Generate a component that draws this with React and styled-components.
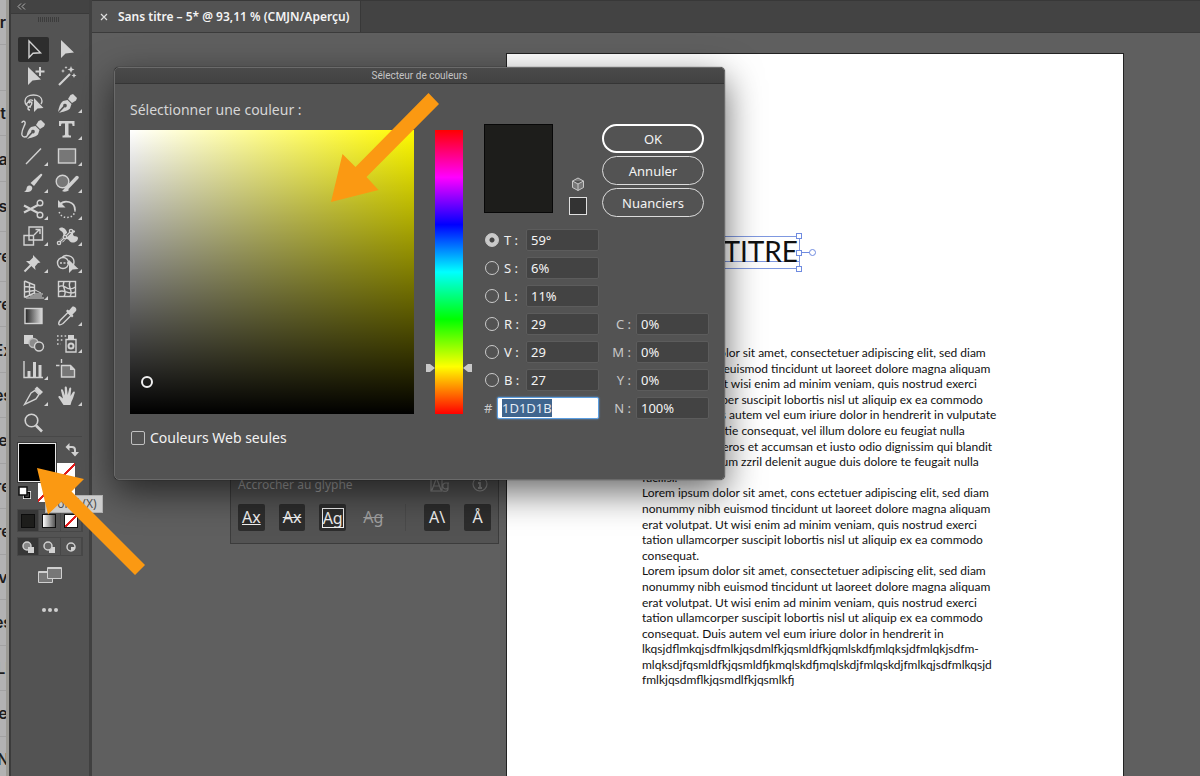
import { useEffect, useRef, useState } from "react";
import styled, { createGlobalStyle, css } from "styled-components";

const UI_FONT = `"Noto Sans", "Open Sans", sans-serif`;
const ORANGE = "#fb9912";

const GlobalStyle = createGlobalStyle`
  * {
    box-sizing: border-box;
  }

  body {
    margin: 0;
    background: #5f5f5f;
    font-family: ${UI_FONT};
    overflow: hidden;
  }

  button, input {
    font-family: inherit;
    margin: 0;
    padding: 0;
  }
`;

const Screen = styled.div`
  position: relative;
  display: flex;
  height: 100vh;
  overflow: hidden;
`;

/* ---------- window behind ---------- */

const BackWindow = styled.div`
  display: flex;
  flex-direction: column;
  flex: none;
  width: 9px;
  margin-bottom: -6px;
  background: #b2b2b2;
  border-right: 3px solid #9c9b95;
  font-family: Inter, sans-serif;
  font-size: 16px;
  font-weight: 600;
  color: #1c1c1c;
`;

const BackRow = styled.div`
  display: flex;
  flex: ${({ $tall }) => ($tall ? 1.1 : 1)} 0 0;
  align-items: center;
  justify-content: center;
  overflow: hidden;
  border-bottom: 1px solid #a2a2a2;
`;

const backRows = [
  { text: "r" },
  { text: "" },
  { text: "t" },
  { text: "a" },
  { text: "s", tall: true },
  { text: "re", tall: true },
  { text: "re" },
  { text: "Ex" },
  { text: "es" },
  { text: "e" },
  { text: "re" },
  { text: "re" },
  { text: "v" },
  { text: "es" },
  { text: "LI" },
  { text: "e" },
  { text: "N" },
];

/* ---------- tool icons ---------- */

const Icon = styled.svg`
  display: block;
  width: 24px;
  height: 24px;
  fill: none;
  stroke: #d2d2d2;
  stroke-width: 1.4;
`;

const solid = { fill: "#d2d2d2", stroke: "none" };

const nib = (
  <>
    <path {...solid} d="M3 21c1-5 2-8.500 5-11l4.500-1 4 4-1.500 4.500c-3 3-7 3-11 4.500l5.500-5.700a1.800 1.800 0 1 0-1.200-1.200z" />
    <path {...solid} d="M13 8l2.500-4 2.500-1 4 4-1 2.500L17 12z" />
  </>
);

const tools = [
  { name: "Sélection", active: true, icon: <path d="M8 4v16.500l4-4.300 7.500-.4z" /> },
  { name: "Sélection directe", icon: <path {...solid} d="M6 3v18l4.500-4.500 8.500-1z" /> },
  {
    name: "Sélection directe progressive",
    icon: (
      <>
        <path {...solid} d="M7 3v18l4.500-4.500 8.500-1z" />
        <path strokeWidth="2" d="M19 3v9M14.500 7.500h9" />
      </>
    ),
  },
  {
    name: "Baguette magique",
    icon: (
      <>
        <path strokeWidth="2.200" d="M4 21l11-11" />
        <path {...solid} d="M16 2l1 2.500 2.500 1-2.500 1-1 2.500-1-2.500-2.500-1 2.500-1zM8 5l.6 1.400L10 7l-1.400.6L8 9l-.6-1.400L6 7l1.400-.6zM19 9l.8 1.700 1.700.8-1.700.8L19 14l-.8-1.700-1.700-.8 1.700-.8zM11 2l.5 1 1 .5-1 .5-.5 1-.5-1-1-.5 1-.5z" />
      </>
    ),
  },
  {
    name: "Lasso",
    icon: (
      <>
        <path d="M10 16c-3 0-6-2-6-6 0-4 4-6 8.500-6S21 6 21 10c0 1-.3 2-1 3M6 14c-1-2 2-4 4-3s0 4-2 5-1 3 1 3M12 10c-3-3-6 1-3 2" />
        <path {...solid} d="M13 7v14l3.500-3.500 6-.5z" />
      </>
    ),
  },
  { name: "Plume", more: true, icon: nib },
  {
    name: "Courbure",
    icon: (
      <>
        <path d="M1 6c0-3 4-2 3 1S0 14 1 18c1 3 4 2 5 1" />
        <g transform="translate(2 0)">{nib}</g>
      </>
    ),
  },
  {
    name: "Texte",
    more: true,
    icon: <path {...solid} d="M4 4h15.500v5h-2c0-2-.5-2.500-1.500-2.500h-2.500V17c0 1.500.5 1.500 2.500 1.500v2H7.500v-2c2 0 2.500 0 2.500-1.500V6.500H7.500C6.500 6.500 6 7 6 9H4z" />,
  },
  { name: "Segment de droite", more: true, icon: <path d="M5 20L20 4.500" /> },
  { name: "Rectangle", more: true, icon: <rect x="3.500" y="5" width="17" height="14" fill="#777" /> },
  {
    name: "Pinceau",
    more: true,
    icon: (
      <>
        <path {...solid} d="M3 20c3 0 2-2 3-4s4-2 5 0-1 5-4 5c-2 0-3 0-4-1z" />
        <path {...solid} d="M9.500 12l10-9c1.200-.8 2.300.3 1.500 1.500L13 15z" />
      </>
    ),
  },
  {
    name: "Forme de tache",
    more: true,
    icon: (
      <>
        <circle cx="7.500" cy="10.500" r="6.300" fill="#777" />
        <path strokeWidth="3.400" strokeLinecap="round" d="M12 17L22 6.500" />
        <path {...solid} d="M7 20c2-1 2-3 4-4l3 3c-2 2-5 2-7 1z" />
      </>
    ),
  },
  {
    name: "Ciseaux",
    more: true,
    icon: (
      <>
        <circle cx="19" cy="6" r="2.800" />
        <circle cx="19" cy="18" r="2.800" />
        <path strokeWidth="2.200" d="M17 8L3 15.500M17 16L3 8.500" />
      </>
    ),
  },
  {
    name: "Rotation",
    more: true,
    icon: (
      <>
        <path strokeWidth="1.800" d="M5 7.500C9 2.500 20 4 20 13" />
        <path strokeWidth="1.500" strokeDasharray="1.500 2" d="M20 13c0 10-16 10-16 0" />
        <path {...solid} d="M3 3v7.500h7.500z" />
      </>
    ),
  },
  {
    name: "Mise à l'échelle",
    more: true,
    icon: (
      <>
        <path d="M8 3h13.500v13H8zM3 11.500h9.500V21H3z" />
        <path d="M13 11l5-5M14.500 5.500H19V10" />
      </>
    ),
  },
  {
    name: "Largeur",
    more: true,
    icon: (
      <>
        <path
          {...solid}
          d="M4 5c1-2 4-2 6 0 2 1.500 2 5 4 5.500 2 0 1-3 3.500-4 2-1 3.500 1 2 2-1.500 0-2 2-1 3 1.500 1.500 4 0 4.500 2.500 0 3-3 5-6 4.500-3-.5-3-4-5.500-3.500-2 .5-2 3.500-5 3.500-2.500 0-3-2-1-3.500C8 13 9 11 8 9 7 7 5 7 4 5z"
        />
        <path stroke="#535353" strokeWidth="3" d="M5 18L15 8" />
        <path strokeWidth="1.200" d="M4 19L16 7" />
        <circle cx="4" cy="19" r="1.600" fill="#535353" />
        <circle cx="10" cy="13" r="1.600" fill="#535353" />
        <circle cx="16" cy="7" r="1.600" fill="#535353" />
      </>
    ),
  },
  {
    name: "Punaise",
    more: true,
    icon: (
      <>
        <path {...solid} d="M12 4l7.500 7.500-2.500.5-3 3.500.5 3.500-9.500-9 3.500 0 3.500-3.500z" />
        <path strokeWidth="2" d="M10 14l-6.500 6.500" />
      </>
    ),
  },
  {
    name: "Concepteur de forme",
    more: true,
    icon: (
      <>
        <circle cx="8" cy="12" r="5.500" />
        <path d="M7 6.500C10 3 19 4 19 11c0 2-.5 3-1 4" />
        <path strokeDasharray="2 1.500" d="M5 12h10" />
        <path {...solid} d="M14 9v13l3.500-3.500 6-.5z" />
      </>
    ),
  },
  {
    name: "Grille de perspective",
    more: true,
    icon: (
      <>
        <path d="M3.500 4v16.500M3.500 4l10 4v8l-10 4.500M3.500 9.500l10 1M3.500 15l10-1.500M8.500 6v12" />
        <path strokeWidth="1" d="M14 13l6 3M13 17h9M9 19h12M5 21h18" />
      </>
    ),
  },
  {
    name: "Filet",
    icon: (
      <>
        <rect x="3.500" y="4.500" width="17" height="15" />
        <path d="M3.500 10c6-5 8 6 17 0M3.500 15c6-4 9 4 17 0M9 4.500c-3 6 4 9 0 15M15 4.500c-3 6 4 9 0 15" />
      </>
    ),
  },
  { name: "Dégradé", icon: <rect x="4" y="4.500" width="17" height="15" fill="url(#toolGradient)" /> },
  {
    name: "Pipette",
    more: true,
    icon: (
      <>
        <path d="M4 20.500c-1-1 0-2.500 1-4l8-8 3 3-8 8c-1.500 1-3 2-4 1z" />
        <path {...solid} d="M11 7l1.500-1.500 1.500 1 3-3.500c2-1.500 5.500 1.500 4 4L17.500 10.500l1 1.500L17 13.500z" />
      </>
    ),
  },
  {
    name: "Dégradé de formes",
    icon: (
      <>
        <path {...solid} d="M3 4h9v9H3z" />
        <circle cx="12.500" cy="12" r="4.500" fill="#8c8c8c" stroke="#bbb" />
        <circle cx="18" cy="15.500" r="4.500" fill="#535353" />
      </>
    ),
  },
  {
    name: "Pulvérisation de symboles",
    more: true,
    icon: (
      <>
        <path d="M11 8.500h10V21H11z" />
        <circle cx="16" cy="15" r="2.500" strokeWidth="2" />
        <path {...solid} d="M13 4h6v4h-6z" />
        <path strokeWidth="1.600" strokeDasharray="1.600 2.200" d="M2 5h10M2 9h7M2 13h4" />
      </>
    ),
  },
  {
    name: "Graphe à barres",
    more: true,
    icon: (
      <>
        <path d="M3 4v16.500h19" />
        <path strokeWidth="3" d="M8 20v-6M13.500 20V5M19 20V8" />
      </>
    ),
  },
  {
    name: "Plan de travail",
    icon: (
      <>
        <path fill="#777" d="M6.500 8.500h9l4 4V20h-13z" />
        <path d="M6.500 2v4M1 8.500h3.500" />
        <path {...solid} d="M15 8v5h5z" />
      </>
    ),
  },
  {
    name: "Tranche",
    more: true,
    icon: (
      <>
        <path d="M3.500 20.500L10 9l4-2.500 4 4L15 15z" />
        <path {...solid} d="M13.500 5l2.500-2.500 6 5.500-3 3z" />
      </>
    ),
  },
  {
    name: "Main",
    more: true,
    icon: (
      <path
        {...solid}
        d="M8.500 21C7 19 5 15.500 3.500 13.500c-.6-1.300 1-2 2-1L8 14.500 6 6.500c-.2-1.500 1.500-1.800 2-.5l2 5.500-.3-8c0-1.500 2-1.500 2.200 0l.8 7.500 1.500-6.500c.5-1.500 2.300-1 2 .5L15.500 12l2.500-4c.8-1.200 2.300-.4 1.700 1-1 3-1.700 6-3.200 8.500L15.500 21z"
      />
    ),
  },
  {
    name: "Zoom",
    icon: (
      <>
        <circle cx="10.500" cy="9.500" r="6.300" strokeWidth="1.600" />
        <path strokeWidth="2.600" d="M15 14.500l6 6" />
      </>
    ),
  },
];

/* ---------- tools panel ---------- */

const ToolPanel = styled.aside`
  display: flex;
  flex-direction: column;
  flex: none;
  width: 83px;
  background: #535353;
  border-left: 2px solid #3b3b3b;
  border-right: 3px solid #404040;
`;

const PanelHeader = styled.div`
  display: flex;
  align-items: center;
  flex: none;
  height: 14px;
  padding-left: 6px;
  background: #434343;
  border-bottom: 1px solid #3a3a3a;
`;

const Grip = styled.div`
  width: 22px;
  height: 5px;
  margin: 3px auto 0 27px;
  background: repeating-linear-gradient(90deg, #3c3c3c 0 1px, #535353 1px 2px);
`;

const ToolGrid = styled.div`
  display: grid;
  grid-template-columns: 34px 34px;
  grid-auto-rows: 1fr;
  height: 400px;
  margin: 14px 0 0 5px;
`;

const ToolButton = styled.button`
  position: relative;
  display: grid;
  place-items: center;
  place-self: center;
  width: 31px;
  height: 25px;
  border: 0;
  border-radius: 2px;
  background: ${({ $active }) => ($active ? "#2d2d2d" : "none")};

  ${({ $more }) =>
    $more &&
    css`
      &::after {
        content: "";
        position: absolute;
        right: 1px;
        bottom: 2px;
        border: 2px solid #d2d2d2;
        border-top-color: transparent;
        border-left-color: transparent;
      }
    `}
`;

const PaintArea = styled.div`
  display: grid;
  grid-template-columns: 20px 18px 12px;
  grid-template-rows: 20px 19px 20px;
  margin: 0 7px;
  padding-top: 6px;
  border-top: 1px solid #484848;
`;

const FillSwatch = styled.button`
  grid-area: 1 / 1 / 3 / 3;
  z-index: 1;
  border: 1px solid #e8e8e8;
  outline: 1px solid #3a3a3a;
  background: #000;
`;

const StrokeSwatch = styled.button`
  grid-area: 2 / 2 / 4 / 4;
  margin-right: -7px;
  border: 0;
  background: linear-gradient(135deg, #fff 48%, #e01b1b 48% 52%, #fff 52%);
`;

const SmallIcon = styled.svg`
  width: 14px;
  height: 14px;
  fill: none;
  stroke: #d0d0d0;
  stroke-width: 1.5;
`;

const SwapButton = styled.button`
  grid-area: 1 / 3;
  margin-left: 9px;
  border: 0;
  background: none;
  width: 14px;
  height: 16px;
`;

const ResetButton = styled.button`
  grid-area: 3 / 1;
  align-self: end;
  width: 14px;
  height: 16px;
  border: 0;
  background: none;
`;

const ModeRow = styled.div`
  display: grid;
  grid-template-columns: repeat(3, 1fr);
  width: 66px;
  margin: ${({ $gap }) => $gap}px 0 0 6px;
  border: 1px solid #474747;
`;

const ModeButton = styled.button`
  display: grid;
  place-items: center;
  height: ${({ $tall }) => ($tall ? 21 : 17)}px;
  border: 0;
  border-right: 1px solid #474747;
  background: ${({ $active }) => ($active ? "#373737" : "none")};
`;

const Chip = styled.span`
  width: 14px;
  height: 14px;
  border: 1px solid ${({ $edge }) => $edge};
  background: ${({ $paint }) => $paint};
`;

const PlainButton = styled.button`
  display: block;
  margin: ${({ $top }) => $top}px auto 0 26px;
  border: 0;
  background: none;
  height: 20px;
`;

const Tooltip = styled.div`
  position: absolute;
  left: 45px;
  top: 495px;
  z-index: 5;
  padding: 0 5px;
  height: 18px;
  background: #cdcdcd;
  border: 1px solid #b0b0b0;
  color: #4d4d4d;
  font-size: 12px;
  line-height: 16px;
`;

function Tools() {
  return (
    <ToolPanel>
      <PanelHeader>
        <svg width="9" height="7" fill="none" stroke="#b0b0b0">
          <path d="M4 .5l-3 3 3 3M8 .5l-3 3 3 3" />
        </svg>
      </PanelHeader>
      <Grip />
      <ToolGrid>
        {tools.map(({ name, icon, active, more }) => (
          <ToolButton key={name} aria-label={name} $active={active} $more={more}>
            <Icon viewBox="0 0 24 24">{icon}</Icon>
          </ToolButton>
        ))}
      </ToolGrid>
      <PaintArea>
        <FillSwatch aria-label="Fond" />
        <StrokeSwatch aria-label="Contour" />
        <SwapButton aria-label="Permuter">
          <SmallIcon viewBox="0 0 14 14">
            <path strokeWidth="2" d="M4 4h3q3 0 3 3v3" />
            <path {...solid} d="M4.500 0v8L.5 4zM6 9h8l-4 4.500z" />
          </SmallIcon>
        </SwapButton>
        <ResetButton aria-label="Par défaut">
          <SmallIcon viewBox="0 0 14 14">
            <rect x="5.500" y="5.500" width="7" height="7" stroke="#fff" strokeWidth="1" />
            <rect x="6.500" y="6.500" width="5" height="5" stroke="#000" strokeWidth="1.500" />
            <rect x="1" y="1" width="8" height="8" fill="#fff" stroke="#111" />
          </SmallIcon>
        </ResetButton>
      </PaintArea>
      <ModeRow $gap={7}>
        <ModeButton $active aria-label="Couleur" $tall>
          <Chip $edge="#0c0c0c" $paint="#1d1d1b" />
        </ModeButton>
        <ModeButton aria-label="Dégradé" $tall>
          <Chip $edge="#111" $paint="linear-gradient(90deg, #fff, #555)" />
        </ModeButton>
        <ModeButton aria-label="Sans" $tall>
          <Chip $edge="#111" $paint="linear-gradient(135deg, #fff 42%, #e01b1b 42% 58%, #fff 58%)" />
        </ModeButton>
      </ModeRow>
      <ModeRow $gap={5}>
        <ModeButton $active aria-label="Dessin normal">
          <SmallIcon viewBox="0 0 14 14">
            <circle cx="6" cy="6" r="4" fill="#888" />
            <path {...solid} d="M7 7h6v6H7z" />
          </SmallIcon>
        </ModeButton>
        <ModeButton aria-label="Dessin arrière">
          <SmallIcon viewBox="0 0 14 14">
            <path {...solid} d="M7 7h6v6H7z" />
            <circle cx="6" cy="6" r="4" fill="#666" />
          </SmallIcon>
        </ModeButton>
        <ModeButton aria-label="Dessin intérieur">
          <SmallIcon viewBox="0 0 14 14">
            <circle cx="7" cy="7" r="4" />
            <path {...solid} d="M7 7h4v2l-3 2H7z" />
          </SmallIcon>
        </ModeButton>
      </ModeRow>
      <PlainButton $top={10} aria-label="Mode d'affichage">
        <svg width="26" height="18" fill="#777" stroke="#cfcfcf">
          <path d="M1.500 5.500h14v11h-14z" />
          <path d="M1.500 6.500h14" />
          <path d="M10.500 1.500h14v11h-14z" />
          <path d="M10.500 2.500h14" />
        </svg>
      </PlainButton>
      <PlainButton $top={14} aria-label="Modifier la barre d'outils">
        <svg width="26" height="10" fill="#cfcfcf">
          <circle cx="7" cy="5" r="2" />
          <circle cx="13" cy="5" r="2" />
          <circle cx="19" cy="5" r="2" />
        </svg>
      </PlainButton>
    </ToolPanel>
  );
}

/* ---------- document ---------- */

const Main = styled.main`
  display: flex;
  flex-direction: column;
  flex: 1;
  min-width: 0;
  background: #5f5f5f;
`;

const TabBar = styled.div`
  display: flex;
  flex: none;
  height: 33px;
  background: #434343;
  border-top: 1px solid #383838;
  border-bottom: 1px solid #3b3b3b;
`;

const Tab = styled.div`
  display: flex;
  align-items: center;
  gap: 10px;
  padding: 0 10px 0 8px;
  background: #535353;
  border-right: 1px solid #383838;
  color: #f4f4f4;
  font-size: 12px;
  font-weight: 600;
`;

const CloseButton = styled.button`
  display: flex;
  border: 0;
  background: none;
`;

const Artboard = styled.article`
  flex: 1;
  margin: 20px 76px 0 414px;
  padding: 182px 0 0 135px;
  background: #fff;
  border: 1px solid #222;
  border-bottom: 0;
  color: #111;
  font-family: Lato, sans-serif;
  white-space: nowrap;
`;

const TitleFrame = styled.div`
  position: relative;
  width: 158px;
  height: 33px;
  border: 1px solid #7f98e0;
`;

const Title = styled.h1`
  margin: 0;
  height: 25px;
  padding-right: 1px;
  border-bottom: 1px solid #7f98e0;
  text-align: right;
  font-size: 28px;
  font-weight: 400;
  line-height: 28px;
`;

const FrameHandles = styled.svg`
  position: absolute;
  right: -18px;
  top: -5px;
  width: 22px;
  height: 41px;
  fill: #fff;
  stroke: #6f8be0;
`;

const Copy = styled.div`
  margin-top: 76px;
  font-size: 12px;
  line-height: 1.3;
`;

const copyLines = [
  "Lorem ipsum dolor sit amet, consectetuer adipiscing elit, sed diam",
  "nonummy nibh euismod tincidunt ut laoreet dolore magna aliquam",
  "erat volutpat. Ut wisi enim ad minim veniam, quis nostrud exerci",
  "tation ullamcorper suscipit lobortis nisl ut aliquip ex ea commodo",
  "consequat. Duis autem vel eum iriure dolor in hendrerit in vulputate",
  "velit esse molestie consequat, vel illum dolore eu feugiat nulla",
  "facilisis at vero eros et accumsan et iusto odio dignissim qui blandit",
  "praesent luptatum zzril delenit augue duis dolore te feugait nulla",
  "facilisi.",
  "Lorem ipsum dolor sit amet, cons ectetuer adipiscing elit, sed diam",
  "nonummy nibh euismod tincidunt ut laoreet dolore magna aliquam",
  "erat volutpat. Ut wisi enim ad minim veniam, quis nostrud exerci",
  "tation ullamcorper suscipit lobortis nisl ut aliquip ex ea commodo",
  "consequat.",
  "Lorem ipsum dolor sit amet, consectetuer adipiscing elit, sed diam",
  "nonummy nibh euismod tincidunt ut laoreet dolore magna aliquam",
  "erat volutpat. Ut wisi enim ad minim veniam, quis nostrud exerci",
  "tation ullamcorper suscipit lobortis nisl ut aliquip ex ea commodo",
  "consequat. Duis autem vel eum iriure dolor in hendrerit in",
  "lkqsjdflmkqjsdfmlkjqsdmlfkjqsmldfkjqmlskdfjmlqksjdfmlqkjsdfm-",
  "mlqksdjfqsmldfkjqsmldfjkmqlskdfjmqlskdjfmlqskdjfmlkqjsdfmlkqsjd",
  "fmlkjqsdmflkjqsmdlfkjqsmlkfj",
];

function Page() {
  return (
    <Main>
      <TabBar>
        <Tab>
          <CloseButton aria-label="Fermer">
            <svg width="8" height="8" stroke="#ddd" strokeWidth="1.200">
              <path d="M1 1l6 6M7 1l-6 6" />
            </svg>
          </CloseButton>
          Sans titre – 5* @ 93,11 % (CMJN/Aperçu)
        </Tab>
      </TabBar>
      <Artboard>
        <TitleFrame>
          <Title>TITRE</Title>
          <FrameHandles viewBox="0 0 22 41">
            <path d="M4 20.500h11" />
            <rect x="1.500" y="1.500" width="5" height="5" />
            <rect x="1.500" y="18.500" width="5" height="5" />
            <rect x="1.500" y="34.500" width="5" height="5" />
            <circle cx="17.500" cy="20.500" r="3" />
          </FrameHandles>
        </TitleFrame>
        <Copy>
          {copyLines.map((line, index) => (
            <div key={index}>{line}</div>
          ))}
        </Copy>
      </Artboard>
    </Main>
  );
}

/* ---------- glyph snapping panel ---------- */

const GlyphPanel = styled.section`
  position: absolute;
  left: 230px;
  top: 440px;
  width: 269px;
  height: 104px;
  padding: 34px 7px 0;
  background: #535353;
  border: 1px solid #3c3c3c;
  color: #a0a0a0;
`;

const GlyphHeader = styled.div`
  display: flex;
  align-items: center;
  height: 18px;
  margin-bottom: 11px;
  font-size: 12px;
`;

const GlyphHeaderIcons = styled.svg`
  width: 58px;
  height: 16px;
  margin-left: auto;
  margin-right: 3px;
  fill: none;
  stroke: #8c8c8c;
  stroke-width: 1.2;
`;

const GlyphRow = styled.div`
  display: flex;
  gap: 14px;
`;

const GlyphButton = styled.button`
  display: grid;
  place-items: center;
  width: 27px;
  height: 27px;
  border: 0;
  border-radius: 2px;
  background: ${({ $flat }) => ($flat ? "none" : "#2d2d2d")};
  color: ${({ $flat }) => ($flat ? "#a0a0a0" : "#f0f0f0")};
  font-size: 16px;
`;

const Letters = styled.span`
  line-height: 19px;
  ${({ $mark }) => $mark === "base" && "text-decoration: underline;"}
  ${({ $mark }) => $mark === "through" && "text-decoration: line-through;"}
  ${({ $mark }) => $mark === "box" && "border: 1px solid #f0f0f0; line-height: 18px;"}
`;

const GlyphDivider = styled.span`
  width: 1px;
  margin: 0 4px;
  background: #4a4a4a;
`;

function GlyphSnap() {
  return (
    <GlyphPanel>
      <GlyphHeader>
        Accrocher au glyphe
        <GlyphHeaderIcons viewBox="0 0 58 16">
          <path d="M2 14L6.500 2 11 14M3.500 10h6M1 15V1h11v14zM19 7h-3a3 3 0 1 0 2 5V7v6q0 3-5 2" />
          <circle cx="50" cy="8" r="7" />
          <path strokeWidth="1.800" d="M48 7h2v5M48 12h4M50 3v2" />
        </GlyphHeaderIcons>
      </GlyphHeader>
      <GlyphRow>
        <GlyphButton>
          <Letters $mark="base">Ax</Letters>
        </GlyphButton>
        <GlyphButton>
          <Letters $mark="through">Ax</Letters>
        </GlyphButton>
        <GlyphButton>
          <Letters $mark="box">Ag</Letters>
        </GlyphButton>
        <GlyphButton $flat>
          <Letters $mark="through">Ag</Letters>
        </GlyphButton>
        <GlyphDivider />
        <GlyphButton>
          <Letters>A\</Letters>
        </GlyphButton>
        <GlyphButton>
          <Letters>Å</Letters>
        </GlyphButton>
      </GlyphRow>
    </GlyphPanel>
  );
}

/* ---------- colour picker ---------- */

const Dialog = styled.section`
  position: absolute;
  left: 114px;
  top: 67px;
  z-index: 3;
  width: 611px;
  height: 413px;
  border: 1px solid #6a6a6a;
  border-radius: 5px;
  background: #535353;
  box-shadow: 0 12px 36px rgba(0, 0, 0, 0.6), 0 0 1px #000;
  color: #f2f2f2;
  font-size: 13px;
`;

const DialogBar = styled.h2`
  margin: 0;
  height: 16px;
  border-bottom: 1px solid #353535;
  border-radius: 4px 4px 0 0;
  background: linear-gradient(#4a4a4a, #424242);
  color: #c4c4c4;
  font-family: Roboto, sans-serif;
  font-size: 10px;
  font-weight: 400;
  line-height: 15px;
  text-align: center;
`;

const DialogBody = styled.div`
  display: flex;
  padding: 16px 15px 0;
`;

const FieldColumn = styled.div`
  width: 284px;
`;

const Prompt = styled.p`
  margin: 0 0 10px;
  line-height: 20px;
  font-size: 14px;
  color: #d6d6d6;
`;

const ColorField = styled.div`
  position: relative;
  height: 284px;
  background: linear-gradient(to top, #000, transparent), linear-gradient(to right, #fff, #fffa00);
`;

const FieldMarker = styled.span`
  position: absolute;
  left: 11px;
  top: 246px;
  width: 12px;
  height: 12px;
  border: 2px solid #f0f0f0;
  border-radius: 50%;
`;

const WebOnly = styled.label`
  display: flex;
  align-items: center;
  gap: 5px;
  margin: 14px 0 0 1px;
  line-height: 20px;
  font-size: 14px;
`;

const CheckBox = styled.input`
  appearance: none;
  width: 14px;
  height: 14px;
  border: 1px solid #c0c0c0;
  border-radius: 2px;
`;

const HueBar = styled.div`
  position: relative;
  width: 28px;
  height: 284px;
  margin: 30px 21px 0;
  background: linear-gradient(#f00, #f0f, #00f, #0ff, #0f0, #ff0, #f00);
`;

const HueHandles = styled.svg`
  position: absolute;
  left: -9px;
  top: 233px;
  width: 46px;
  height: 10px;
  fill: #c8c8c8;
`;

const Controls = styled.div`
  flex: 1;
  margin-top: 24px;
`;

const TopRow = styled.div`
  display: flex;
  justify-content: space-between;
  padding-right: 5px;
`;

const Preview = styled.div`
  width: 69px;
  height: 89px;
  border: 1px solid #080808;
  background: #1d1d1b;
`;

const WebColor = styled.div`
  display: flex;
  flex-direction: column;
  align-items: center;
  justify-content: flex-end;
  gap: 6px;
  height: 91px;
`;

const WebSwatch = styled.span`
  width: 18px;
  height: 18px;
  border: 1px solid #e0e0e0;
  background: #333;
`;

const Actions = styled.div`
  display: flex;
  flex-direction: column;
  gap: 3px;
  width: 102px;
`;

const ActionButton = styled.button`
  height: 29px;
  border: ${({ $primary }) => ($primary ? "2px solid #fff" : "1px solid #dcdcdc")};
  border-radius: 15px;
  background: none;
  color: #f4f4f4;
  font-size: 13px;
`;

const Values = styled.div`
  display: flex;
  justify-content: space-between;
  align-items: flex-end;
  margin-top: 12px;
`;

const ValueColumn = styled.div`
  display: flex;
  flex-direction: column;
  gap: 6px;
`;

const ValueRow = styled.label`
  display: flex;
  align-items: center;
  justify-content: flex-end;
  height: 22px;
`;

const Radio = styled.input`
  appearance: none;
  width: 14px;
  height: 14px;
  margin-left: 1px;
  border: 1px solid #cacaca;
  border-radius: 50%;

  &:checked {
    background: radial-gradient(circle, #444 2px, #cacaca 3px);
  }
`;

const ValueName = styled.span`
  width: 22px;
  padding-left: 5px;
  white-space: nowrap;
  color: #f0f0f0;
`;

const InkName = styled.span`
  text-align: right;
  color: #c8c8c8;
`;

const HexName = styled.span`
  width: 13px;
  color: #c8c8c8;
`;

const ValueInput = styled.input`
  width: 73px;
  height: 22px;
  margin-left: 5px;
  padding: 0 4px;
  border: 1px solid #5c5c5c;
  border-radius: 2px;
  outline: 0;
  background: #434343;
  color: #f4f4f4;
  font-size: 13px;
`;

const HexInput = styled(ValueInput)`
  flex: 1;
  min-width: 0;
  margin-left: 0;
  border: 1px solid #5c9ee0;
  box-shadow: 0 0 2px #5c9ee0;
  background: #fff;
  color: #222;

  &::selection {
    background: #3f658e;
    color: #e4ecf4;
  }
`;

const channels = [
  { name: "T", value: "59°" },
  { name: "S", value: "6%" },
  { name: "L", value: "11%" },
  { name: "R", value: "29" },
  { name: "V", value: "29" },
  { name: "B", value: "27" },
];

const inks = [
  { name: "C", value: "0%" },
  { name: "M", value: "0%" },
  { name: "Y", value: "0%" },
  { name: "N", value: "100%" },
];

function ColorPicker() {
  const [channel, setChannel] = useState("T");
  const hexRef = useRef(null);

  useEffect(() => {
    hexRef.current.focus();
    hexRef.current.select();
  }, []);

  return (
    <Dialog>
      <DialogBar>Sélecteur de couleurs</DialogBar>
      <DialogBody>
        <FieldColumn>
          <Prompt>Sélectionner une couleur :</Prompt>
          <ColorField>
            <FieldMarker />
          </ColorField>
          <WebOnly>
            <CheckBox type="checkbox" />
            Couleurs Web seules
          </WebOnly>
        </FieldColumn>
        <HueBar>
          <HueHandles viewBox="0 0 46 10">
            <path d="M0 1h4l5 4-5 4H0zM46 1h-4l-5 4 5 4h4z" />
          </HueHandles>
        </HueBar>
        <Controls>
          <TopRow>
            <Preview />
            <WebColor>
              <svg width="14" height="14" fill="#777" stroke="#c8c8c8">
                <path d="M7 1l5.500 3v6.500L7 13.500l-5.500-3V4zM1.500 4L7 7l5.500-3M7 7v6.500" />
              </svg>
              <WebSwatch />
            </WebColor>
            <Actions>
              <ActionButton $primary>OK</ActionButton>
              <ActionButton>Annuler</ActionButton>
              <ActionButton>Nuanciers</ActionButton>
            </Actions>
          </TopRow>
          <Values>
            <ValueColumn>
              {channels.map(({ name, value }) => (
                <ValueRow key={name}>
                  <Radio
                    type="radio"
                    name="channel"
                    aria-label={name}
                    checked={channel === name}
                    onChange={() => setChannel(name)}
                  />
                  <ValueName>{name} :</ValueName>
                  <ValueInput aria-label={name} defaultValue={value} />
                </ValueRow>
              ))}
              <ValueRow>
                <HexName>#</HexName>
                <HexInput ref={hexRef} defaultValue="1D1D1B" />
              </ValueRow>
            </ValueColumn>
            <ValueColumn>
              {inks.map(({ name, value }) => (
                <ValueRow key={name}>
                  <InkName>{name} :</InkName>
                  <ValueInput defaultValue={value} />
                </ValueRow>
              ))}
            </ValueColumn>
          </Values>
        </Controls>
      </DialogBody>
    </Dialog>
  );
}

/* ---------- callout arrows ---------- */

const Arrow = styled.svg`
  position: absolute;
  left: ${({ $x }) => $x}px;
  top: ${({ $y }) => $y}px;
  z-index: 6;
  width: 110px;
  height: 110px;
  fill: ${ORANGE};
  pointer-events: none;
`;

export default function App() {
  return (
    <Screen>
      <GlobalStyle />
      <svg width="0" height="0" style={{ position: "absolute" }}>
        <linearGradient id="toolGradient">
          <stop offset="0" stopColor="#222" />
          <stop offset="1" stopColor="#ddd" />
        </linearGradient>
      </svg>
      <BackWindow>
        {backRows.map(({ text, tall }, index) => (
          <BackRow key={index} $tall={tall}>
            {text}
          </BackRow>
        ))}
      </BackWindow>
      <Tools />
      <Page />
      <GlyphSnap />
      <ColorPicker />
      <Tooltip>Fond (X)</Tooltip>
      <Arrow $x={331} $y={93} viewBox="0 0 110 110">
        <path d="M0 109L11.500 61 24.500 74 97.500 0 108 11 35.500 84 47.500 97z" />
      </Arrow>
      <Arrow $x={37} $y={468} viewBox="0 0 110 110">
        <path d="M0 0L47 11 34.500 23.500 108 97 98 107 24.500 33.500 11 46.500z" />
      </Arrow>
    </Screen>
  );
}
